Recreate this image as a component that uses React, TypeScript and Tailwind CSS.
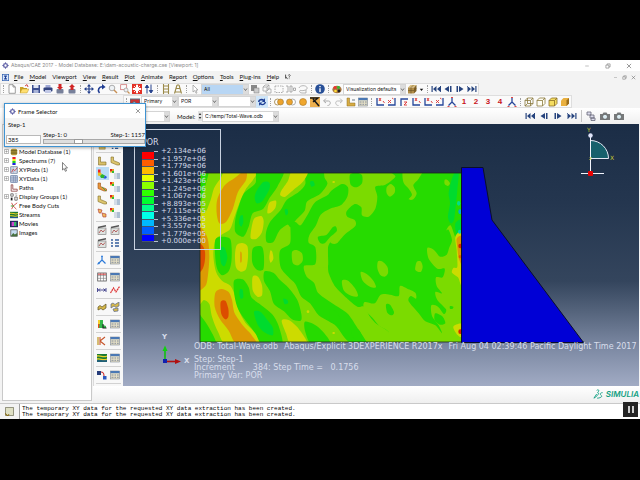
import React from "react";

type Pt = [number, number];

const GREEN = "#26db00";
const LIME = "#7bdb00";
const YELLOW = "#cddb00";
const ORANGE = "#dc9a04";
const RED = "#dc4c00";
const TEAL = "#00db2e";

/* Closed smooth curve through the points "x,y x,y ..." */
function smooth(src: string): string {
  const p: Pt[] = src.split(" ").map((s) => s.split(",").map(Number) as Pt);
  const n = p.length;
  let d = `M${p[0][0]} ${p[0][1]}`;
  for (let i = 0; i < n; i++) {
    const a = p[(i - 1 + n) % n];
    const b = p[i];
    const c = p[(i + 1) % n];
    const e = p[(i + 2) % n];
    d += `C${b[0] + (c[0] - a[0]) / 7} ${b[1] + (c[1] - a[1]) / 7} ${c[0] - (e[0] - b[0]) / 7} ${c[1] - (e[1] - b[1]) / 7} ${c[0]} ${c[1]}`;
  }
  return d + "Z";
}

const CONTOURS: [string, string][] = [
  [GREEN, "20,30 55,30 48,70 38,105 30,140 20,150"],
  [GREEN, "20,460 38,475 58,505 78,555 20,560"],
  // yellow and orange crests along the left edge
  [YELLOW, "62,120 72,85 92,55 112,30 200,30 190,58 166,90 148,130 132,175 120,208 92,226 76,240 70,285 78,335 96,362 122,378 136,410 146,450 166,488 196,520 214,556 112,556 84,515 66,470 58,432 42,420 20,420 20,160 44,160"],
  [ORANGE, "82,118 104,76 134,54 168,30 168,60 144,96 128,148 108,186 88,190 80,160"],
  [ORANGE, "20,206 40,210 54,240 58,290 54,345 46,378 20,380"],
  [RED, "20,250 36,255 45,275 44,306 36,330 20,336"],
  [ORANGE, "76,398 94,387 116,396 126,420 134,460 160,498 184,524 200,556 142,556 116,512 90,478 74,440"],
  [RED, "92,426 106,422 115,446 115,470 106,478 94,462"],
  // troughs
  [GREEN, "76,240 96,230 120,236 125,265 124,306 116,334 96,346 82,328 76,295"],
  [TEAL, "92,262 104,264 112,292 104,318 94,312 90,285"],
  [GREEN, "204,30 196,70 162,100 146,140 136,178 136,216 160,230 176,200 188,160 220,146 240,112 262,80 280,30"],
  [TEAL, "200,92 220,66 238,68 238,88 218,122 200,130 194,112"],
  [TEAL, "150,170 158,166 160,186 154,200 147,190"],
  [GREEN, "132,362 158,358 176,382 184,412 212,434 246,462 266,498 276,556 218,556 196,520 164,478 144,446 134,410"],
  [TEAL, "192,456 212,456 232,480 248,502 248,526 222,516 204,496"],
  [TEAL, "150,388 158,390 160,412 152,416 148,402"],
  [YELLOW, "140,256 156,249 172,258 174,292 168,328 152,335 138,322 135,285"],
  [ORANGE, "151,276 155,280 155,304 151,306"],
  [GREEN, "188,266 208,258 218,264 222,290 220,328 202,330 187,308"],
  [YELLOW, "194,174 214,168 221,184 216,216 200,236 182,234 186,196"],
  [YELLOW, "188,350 204,350 216,376 216,406 202,410 188,390"],
  [YELLOW, "238,128 258,122 256,144 242,158 232,158"],
  [YELLOW, "241,272 247,276 250,296 242,308 238,294"],
  // inner bands
  [GREEN, "346,30 346,72 326,96 290,120 272,150 240,186 228,218 230,246 250,246 268,212 292,194 302,202 318,180 344,152 352,124 390,102 412,72 404,54 396,30"],
  [TEAL, "284,150 292,148 294,160 288,166"],
  [TEAL, "360,66 370,64 374,76 364,80"],
  [YELLOW, "274,92 294,62 308,30 354,30 340,64 310,90 286,110 271,106"],
  [GREEN, "302,196 316,186 332,196 352,166 374,128 412,106 424,92 456,72 474,82 472,110 452,136 420,146 392,164 378,196 358,226 356,248 376,262 376,312 342,318 350,350 372,368 384,398 412,420 452,446 474,462 500,500 534,556 500,556 470,540 440,500 416,484 386,466 360,430 334,410 316,372 296,352 272,322 270,272 300,250"],
  [GREEN, "224,334 250,338 270,360 296,384 322,420 334,462 332,482 306,478 282,454 252,432 240,394 222,362"],
  [GREEN, "344,486 366,490 390,506 414,534 420,556 366,556 346,516"],
  [TEAL, "280,416 292,420 294,430 284,432"],
  [LIME, "306,276 320,270 336,280 338,302 324,316 308,308"],
  [YELLOW, "275,482 296,480 326,506 354,556 304,556 288,520"],
];

const RIGHT_FIELD =
  "612,30 616,50 586,74 556,80 562,110 556,146 536,170 516,166 514,142 494,132 470,154 472,170 494,180 496,198 466,222 440,250 424,250 414,240 414,320 418,344 436,380 470,414 502,440 522,440 540,470 560,492 592,512 612,536 616,560 830,560 830,30";

const RIGHT_DETAIL: [string, string][] = [
  [LIME, "642,30 640,66 656,86 666,104 656,118 670,118 680,100 670,76 686,56 696,30"],
  [LIME, "590,82 602,72 614,82 614,98 600,110 590,100"],
  [LIME, "764,60 772,60 780,70 774,78 764,72"],
  [LIME, "564,304 576,304 592,320 594,340 584,350 570,344 562,324"],
  [LIME, "512,336 530,342 550,362 558,382 540,380 518,362"],
  [LIME, "456,362 474,362 496,386 504,408 486,408 462,392"],
  [LIME, "680,306 692,304 698,320 692,336 676,330"],
  [LIME, "712,264 732,270 750,290 770,284 778,262 786,240 776,210 768,212 782,196 800,240 830,260 830,560 622,560 594,514 568,498 546,472 522,446 524,426 554,430 572,404 600,404 626,408 630,378 652,386 676,398 678,416 662,408 656,424 686,460 706,484 736,496 756,520 746,496 726,468 724,436 744,440 762,462 768,448 742,420 736,396 756,400 740,378 738,352 758,352 764,326 742,326 716,296"],
  [GREEN, "588,434 600,434 612,456 606,466 592,458"],
  [GREEN, "486,510 504,508 514,522 514,540 496,540 486,526"],
  [GREEN, "420,448 440,456 450,476 452,496 430,490 418,478"],
  [GREEN, "480,44 500,38 516,46 516,70 500,82 482,74"],
  [GREEN, "736,460 758,470 766,490 750,494 734,480"],
  [GREEN, "780,438 790,440 788,446 780,446"],
  [TEAL, "784,62 794,38 806,38 802,90 798,130 792,180 782,190 774,170 780,130 776,100"],
  [TEAL, "796,190 816,180 816,230 800,226"],
  [YELLOW, "796,230 816,222 816,372 804,352 786,338 790,324 802,320 800,270"],
  [ORANGE, "800,236 816,232 816,310 806,294 802,262"],
  [YELLOW, "790,500 816,492 816,530 802,524"],
];

const SPOTS: [string, number, number, number, number][] = [
  ["#d82800", 811, 258, 6, 7],
  ["#e06000", 810, 290, 4, 5],
  ["#00a8dc", 810, 155, 5, 7],
  ["#00cfb0", 809, 215, 5, 6],
  ["#00dc90", 806, 130, 5, 7],
  ["#d82800", 811, 515, 6, 7],
  [YELLOW, 431, 66, 4, 3],
  [YELLOW, 431, 519, 4, 3],
  [YELLOW, 354, 455, 4, 4],
];

function Scene() {
  return (
    <svg className="absolute left-0 top-0" width="517" height="262" viewBox="123 124 517 262" aria-hidden="true">
      <defs>
        <clipPath id="fluid">
          <rect x="200" y="173" width="262" height="169" />
        </clipPath>
      </defs>
      <g clipPath="url(#fluid)">
        <rect x="200" y="173" width="262" height="169" fill={LIME} />
        <g transform="translate(190 160) scale(0.33333)">
          {CONTOURS.map(([c, s], i) => (
            <path key={i} d={smooth(s)} fill={c} />
          ))}
          <path d={smooth(RIGHT_FIELD)} fill={GREEN} />
          <path d={smooth("362,232 376,222 386,236 400,228 420,222 430,204 440,206 438,226 446,236 440,250 426,242 414,262 414,318 398,322 384,318 382,270 370,252")} fill={LIME} />
          <path d={smooth("384,230 410,224 428,202 438,200 440,214 420,232 404,250 390,248")} fill={GREEN} />
          {RIGHT_DETAIL.map(([c, s], i) => (
            <path key={i} d={smooth(s)} fill={c} />
          ))}
          {SPOTS.map(([c, x, y, rx, ry], i) => (
            <ellipse key={i} cx={x} cy={y} rx={rx} ry={ry} fill={c} />
          ))}
        </g>
      </g>
      <path d="M200 173H462M200 173V342H584" fill="none" stroke="#1b2a16" strokeWidth="0.8" />
      <path d="M461.500 167.500H483L492 220L583.500 342.500H461.500Z" fill="#0000d6" stroke="#0b0f2a" strokeWidth="1" />
      {/* model triad */}
      <path d="M165 361V349" stroke="#10c010" strokeWidth="1.600" />
      <path d="M165 345.500L167.500 351H162.500Z" fill="#10d010" />
      <path d="M166 361.500H176" stroke="#b01010" strokeWidth="1.600" />
      <path d="M181 361.500L175 359V364Z" fill="#b01010" />
      <rect x="163" y="359" width="4" height="4" fill="#1020b0" />
      {/* view compass */}
      <path d="M590.500 140.500A18 18 0 0 1 608.500 158.500H590.500Z" fill="#17606c" stroke="#e4e8f4" strokeWidth="1" />
      <path d="M590.500 137V173M581 173.500H604" stroke="#f2f4fc" strokeWidth="1" />
      <circle cx="590.500" cy="135.500" r="2.200" fill="#dfe4fa" />
      <rect x="588" y="171" width="5" height="5" rx="1" fill="#e80000" />
      <path d="M589.500 157.500H591.500L589.500 159.500H591.500" fill="none" stroke="#c8d040" strokeWidth="0.600" />
    </svg>
  );
}

const LEGEND_VALUES = [
  "+2.134e+06", "+1.957e+06", "+1.779e+06", "+1.601e+06", "+1.423e+06", "+1.245e+06", "+1.067e+06",
  "+8.893e+05", "+7.115e+05", "+5.336e+05", "+3.557e+05", "+1.779e+05", "+0.000e+00",
];
const LEGEND_COLORS = [
  "bg-[#ff0000]", "bg-[#ff5d00]", "bg-[#ffb900]", "bg-[#e8ff00]", "bg-[#8bff00]", "bg-[#2eff00]",
  "bg-[#00ff2e]", "bg-[#00ff8b]", "bg-[#00ffe8]", "bg-[#00b9ff]", "bg-[#005dff]", "bg-[#0000ff]",
];

/* ---- small icons, all on a 10 x 10 grid ---- */
const G: Record<string, React.ReactNode> = {
  doc: <path d="M2 .7H6L8.300 3V9.300H2ZM6 .7V3H8.300" fill="#fff" stroke="#777" strokeWidth=".7" />,
  open: <><path d="M1 9V3H4L5 4H8V9Z" fill="#c9a227" /><path d="M1 9L3 5H10L8 9Z" fill="#ffdf70" stroke="#a98414" strokeWidth=".4" /><path d="M6 2L8 .6L9 3" fill="none" stroke="#c33" strokeWidth=".9" /></>,
  save: <><rect x="1" y="1" width="8" height="8" fill="#3c4f90" /><rect x="2.500" y="1" width="5" height="3" fill="#dde3f2" /><rect x="2.500" y="6" width="5" height="3" fill="#a9b4d8" /></>,
  print: <><rect x="2.500" y="1" width="5" height="3" fill="#9fa8d5" /><rect x=".5" y="3.500" width="9" height="4" rx="1" fill="#34457f" /><rect x="2" y="6" width="6" height="3" fill="#c2c9e6" /></>,
  dbIn: <><rect x="1.500" y="5" width="7" height="4.500" rx="1" fill="#77809a" /><path d="M3.500 0H6.500V3H8L5 6L2 3H3.500Z" fill="#d02525" /></>,
  dbOut: <><rect x="1.500" y="5" width="7" height="4.500" rx="1" fill="#77809a" /><path d="M5 0L8 3H6.500V6H3.500V3H2Z" fill="#d02525" /></>,
  move: <path d="M5 0L7 2.400H5.600V4.400H7.600V3L10 5L7.600 7V5.600H5.600V7.600H7L5 10L3 7.600H4.400V5.600H2.400V7L0 5L2.400 3V4.400H4.400V2.400H3Z" fill="#24408c" />,
  rotate: <><path d="M3.500 9C1 6 3 2.500 7 2.800" fill="none" stroke="#1f3c92" strokeWidth="1.600" /><path d="M6 0L9.600 3L6 5.600Z" fill="#1f3c92" /></>,
  zoom: <><circle cx="4" cy="4" r="2.800" fill="#eef2f5" stroke="#9a9a9a" strokeWidth=".8" /><path d="M6 6L9 9" stroke="#c79055" strokeWidth="1.400" /></>,
  zoomBox: <><rect x=".7" y=".7" width="6" height="5" fill="none" stroke="#c66" strokeWidth=".7" /><circle cx="6" cy="6" r="2" fill="#eee" stroke="#999" strokeWidth=".7" /><path d="M7.500 7.500L9.500 9.500" stroke="#c79055" strokeWidth="1.200" /></>,
  fit: <><rect width="10" height="10" fill="#e33025" /><path d="M5 .8V9.200M.8 5H9.200" stroke="#fff" strokeWidth="2" /><path d="M2 2L8 8M8 2L2 8" stroke="#fff" strokeWidth=".9" /><rect x="3.700" y="3.700" width="2.600" height="2.600" fill="#fff" /></>,
  upDown: <path d="M3 9.500V3M7 .5V7M1.300 3.500L3 1L4.700 3.500ZM5.300 6.500L7 9L8.700 6.500Z" fill="#24408c" stroke="#24408c" strokeWidth="1" />,
  ruler: <path d="M2.500 0V10M7.500 0V10M2.500 2H7.500M2.500 5H7.500M2.500 8H7.500" stroke="#9b8a4a" strokeWidth="1.100" />,
  persp: <path d="M4 1L1.500 9.500M6 1L8.500 9.500M4 1H6M3 4.500H7M2 8H8" fill="none" stroke="#9b8a4a" strokeWidth="1.100" />,
  cursor: <path d="M3 1V8L4.800 6.500L6 9.300L7 8.800L6 6H8Z" fill="#fff" stroke="#888" strokeWidth=".6" />,
  sq: <><rect x="1" y="1" width="6" height="6" fill="#888" /><rect x="4" y="4" width="5" height="5" fill="#ccc" stroke="#777" strokeWidth=".5" /></>,
  cubeG: <path d="M1 3L3 1H7V5L5 7M1 3H5V7H1ZM5 3L7 1M5 5H9V9H4V7" fill="none" stroke="#999" strokeWidth=".7" />,
  dashed: <rect x="1" y="2" width="8" height="6.500" fill="none" stroke="#999" strokeWidth=".8" strokeDasharray="1.500 1" />,
  nodes: <path d="M0 2H2V8H0M4 2H6V8H4ZM7.500 4H9.500V6.500H7.500Z" fill="none" stroke="#999" strokeWidth=".8" />,
  lasso: <path d="M1 4C2 1 8 1 9 3.500S5 7 3 6.500S1 9 4 9H8V6" fill="none" stroke="#999" strokeWidth=".7" />,
  info: <><circle cx="5" cy="5" r="4.800" fill="#274f97" /><path d="M5 4.200V8M5 2V3.200" stroke="#fff" strokeWidth="1.400" /></>,
  palette: <><ellipse cx="5" cy="5.500" rx="4.600" ry="3.800" fill="#a8763e" /><circle cx="3" cy="3.500" r="1.500" fill="#e33" /><circle cx="6.500" cy="3.500" r="1.400" fill="#3b3" /><circle cx="3.500" cy="7" r="1.300" fill="#fd3" /><circle cx="7" cy="7" r="1.400" fill="#222" /></>,
  cube: <><path d="M1 3.500L3.500 1H9.500L7 3.500Z" fill="#d9bd7d" /><path d="M1 3.500H7V9.500H1Z" fill="#b08c47" /><path d="M7 3.500L9.500 1V7L7 9.500Z" fill="#806025" /><path d="M1 6.500H7L9.500 4M4 9.500V3.500L6.500 1" fill="none" stroke="#5d4820" strokeWidth=".5" /></>,
  caret: <path d="M2.500 4H7.500L5 7Z" fill="#111" />,
  first: <path d="M.5 2H1.700V8H.5ZM5.500 2V8L2 5ZM9.500 2V8L6 5ZM9 2H10V8H9Z" fill="#27447e" />,
  prev: <path d="M6 2V8L1.500 5ZM7 2H8.500V8H7Z" fill="#27447e" />,
  next: <path d="M4 2V8L8.500 5ZM1.500 2H3V8H1.500Z" fill="#27447e" />,
  last: <path d="M8.300 2H9.500V8H8.300ZM4.500 2V8L8 5ZM.5 2V8L4 5ZM0 2H1V8H0Z" fill="#27447e" />,
  contour: <path d="M0 2H10V9H8L5 5H3V9H0Z" fill="#c33" stroke="#578" strokeWidth="1" />,
  sync: <path d="M1 5C1 2 5 1 7 2.500L8 1V5H4.500L6 4C4 3 2.500 4 2.500 5ZM9 5C9 8 5 9 3 7.500L2 9V5.500H5.500L4 6.500C6 7.500 7.500 6.500 7.500 5Z" fill="#1e3f96" />,
  ballA: <><circle cx="3.500" cy="5" r="3" fill="#fff" stroke="#9a7a3a" strokeWidth=".8" /><circle cx="6.500" cy="5" r="3" fill="#eda32c" stroke="#9a7a3a" strokeWidth=".6" /></>,
  ballB: <><circle cx="6.500" cy="5" r="3" fill="#fff" stroke="#999" strokeWidth=".8" /><circle cx="3.500" cy="5" r="3" fill="#eda32c" stroke="#9a7a3a" strokeWidth=".6" /></>,
  ball: <circle cx="5" cy="5" r="3.500" fill="#f0a72e" stroke="#a87626" strokeWidth=".6" />,
  probe: <><rect width="10" height="10" fill="#eeb04e" /><path d="M0 1H8L3 5M3 2L9 9" fill="none" stroke="#171717" strokeWidth="1.500" /></>,
  undo: <path d="M2 4H6.500C9 4 9 8.500 5.500 8.500M4 1.500L1.500 4L4 6" fill="none" stroke="#aaa" strokeWidth="1" />,
  redo: <path d="M8 4H3.500C1 4 1 8.500 4.500 8.500M6 1.500L8.500 4L6 6" fill="none" stroke="#bbb" strokeWidth="1" />,
  ell: <><path d="M1 1H3.500V6H9V9H1Z" fill="#d7ac44" stroke="#8d6c1e" strokeWidth=".5" /><path d="M6 3H9" stroke="#456" strokeWidth=".8" /></>,
  table: <><rect x=".5" y="1" width="9" height="8" fill="#e4dfc6" stroke="#7d8794" strokeWidth=".6" /><rect x=".5" y="1" width="9" height="2.200" fill="#4a78b4" /><path d="M1.500 5H3.500M4.500 5H6M7 5H8.700M1.500 7.300H3.500M4.500 7.300H6M7 7.300H8.700" stroke="#7c8798" strokeWidth=".9" /></>,
  axA: <><path d="M2 1V8H9" fill="none" stroke="#26479a" strokeWidth="1.300" /><path d="M4 1L6 4M6 1L4 4M8 4L9.500 6" stroke="#d33" strokeWidth=".9" /></>,
  axB: <><path d="M8 1V8H1" fill="none" stroke="#26479a" strokeWidth="1.300" /><path d="M1 3L4 6M4 3L1 6M5 1L6.500 2" stroke="#d33" strokeWidth=".9" /></>,
  axC: <><path d="M2 9V2H9" fill="none" stroke="#26479a" strokeWidth="1.300" /><path d="M5 5H8L5 8H8" fill="none" stroke="#d33" strokeWidth=".9" /></>,
  tri: <><path d="M5 1V5L1.500 8.500M5 5L8.500 8.500" fill="none" stroke="#26479a" strokeWidth="1.300" /><path d="M4 .5H6M.5 9.500H2.500M7.500 9.500H9.500" stroke="#d33" strokeWidth=".9" /></>,
  cubeW: <path d="M1 3.500L3.500 1H9V6.500L6.500 9H1ZM1 3.500H6.500V9M6.500 3.500L9 1M3.500 1V6.500H9M3.500 6.500L1 9" fill="none" stroke="#8a7a3e" strokeWidth=".8" />,
  cubeH: <path d="M1 3.500L3.500 1H9V6.500L6.500 9H1ZM1 3.500H6.500V9M6.500 3.500L9 1" fill="#fffef4" stroke="#8a7a3e" strokeWidth=".8" />,
  cubeY: <path d="M1 3.500L3.500 1H9V6.500L6.500 9H1ZM1 3.500H6.500V9M6.500 3.500L9 1" fill="#f5dd62" stroke="#8a6f26" strokeWidth=".8" />,
  cubeS: <><path d="M1 3.500L3.500 1H9V6.500L6.500 9H1Z" fill="#e9b040" /><path d="M6.500 3.500L9 1V6.500L6.500 9Z" fill="#9a6c1c" /></>,
  link: <path d="M1 1H5V4H1ZM4 4H8V7H4ZM5 7H9V9.500H5Z" fill="#dcdcec" stroke="#667" strokeWidth=".8" />,
  camera: <><path d="M0 3H2.500L3.500 1.500H6.500L7.500 3H10V9H0Z" fill="#77797a" /><circle cx="5" cy="5.800" r="2.500" fill="#dcecf2" stroke="#444" strokeWidth=".6" /></>,
  db: <><rect x="1" y="1" width="8" height="8" rx="2" fill="#b59b39" /><path d="M1 3.500H9M1 6.300H9" stroke="#4d4218" strokeWidth="1" /></>,
  spectrum: <><rect x="3" y="0" width="4" height="2.500" fill="#e22" /><rect x="3" y="2.500" width="4" height="2.500" fill="#ee2" /><rect x="3" y="5" width="4" height="2.500" fill="#2c2" /><rect x="3" y="7.500" width="4" height="2.500" fill="#22d" /></>,
  plot: <><rect x="1" y="1" width="8" height="8" fill="#e8edf6" stroke="#556a8c" strokeWidth=".9" /><path d="M1 4H9M1 6.500H9M4 1V9" stroke="#8394b4" strokeWidth=".6" /><path d="M2 8L4 4L6 6L9 2" fill="none" stroke="#c33" strokeWidth=".9" /></>,
  grid: <><rect x="1" y="1" width="8" height="8" fill="#f1f4fa" stroke="#4b6794" strokeWidth="1" /><path d="M1 3.700H9M1 6.300H9M4 1V9M6.500 1V9" stroke="#4b6794" strokeWidth=".8" /></>,
  path: <path d="M1.500 1H3.500V6.500H9M1.500 1V9H9V6.500" fill="none" stroke="#8d4040" strokeWidth="1" />,
  groups: <><path d="M1 1H4V4H1ZM6 5H9V9H6Z" fill="none" stroke="#333" strokeWidth=".8" /><path d="M6 1H9M1 6H3V9H1M7 3H9" stroke="#888" strokeWidth=".8" /></>,
  cuts: <><path d="M2 1L4 5L2 9M4 5L9 1M4 5L8 9" fill="none" stroke="#c33" strokeWidth="1" /><path d="M1 5H5" stroke="#3a3" strokeWidth="1.200" /></>,
  streams: <><rect x="0" y="1" width="10" height="8" fill="#1d7a35" /><path d="M0 3C4 2 6 5 10 3M0 6C4 5 6 8 10 6" fill="none" stroke="#ead228" strokeWidth="1.300" /><path d="M0 8H10" stroke="#2246b8" strokeWidth="1" /></>,
  movies: <><rect x="0" y="1" width="10" height="8" fill="#26265c" /><rect x="2" y="2.500" width="3" height="5" fill="#c4c" /><rect x="5" y="2.500" width="3" height="5" fill="#3b6" /></>,
  images: <><rect x="1" y="1" width="8" height="8" fill="#c5dcf0" stroke="#444" strokeWidth=".9" /><path d="M1 9L4 5L6 7L9 5V9Z" fill="#47703d" /></>,
  beamY: <path d="M1.500 1H3.500V6H9V9H1.500Z" fill="#d8c06a" stroke="#7f6b27" strokeWidth=".6" />,
  beamD: <path d="M1 1H3.500V4.500L9.500 7V9H7L1 6.500Z" fill="#dcc56e" stroke="#7f6b27" strokeWidth=".6" />,
  beamC: <><path d="M1 .5H3.500V4L1 4Z" fill="#e22" /><path d="M1 3.500H3.500L5 5L3 7L1 6.500Z" fill="#e8c020" /><path d="M3 7L5 5L8 6.500L7 9H4Z" fill="#2bb52b" /><path d="M8 6.500L10 8L9 9.500H6.500Z" fill="#2258d8" /></>,
  beamO: <><path d="M1 1H3.500V4.500L9.500 7V9H7L1 6.500Z" fill="#e8953a" stroke="#9a5218" strokeWidth=".6" /><path d="M5 5L9 9" stroke="#3a4" strokeWidth=".8" /></>,
  symb: <path d="M1 1L5 2L4 5H2ZM5 5L9 6V9H6Z" fill="#f0b85a" stroke="#a33" strokeWidth=".6" />,
  list: <><rect x="0" y="0" width="4" height="3.500" fill="#e8a020" /><rect x="0" y="0" width="2" height="2" fill="#d22" /><rect x="2" y="2" width="2" height="2" fill="#3b3" /><path d="M4.500 5H5.500M6.500 5H10M4.500 7H5.500M6.500 7H10M4.500 9H5.500M6.500 9H10" stroke="#3c6a9c" strokeWidth=".8" /></>,
  clap: <><rect x="1" y="3" width="8" height="6.500" fill="#dfe3e0" stroke="#777" strokeWidth=".6" /><path d="M1 2.500L9 .8" stroke="#555" strokeWidth="1.400" /><path d="M2 8L4 5L6 7L8 4.500" fill="none" stroke="#a44" strokeWidth=".8" /></>,
  opts: <path d="M1 2H3M5 2H9M1 5H3M5 5H9M1 8H3M5 8H9" stroke="#345c9a" strokeWidth="1.500" />,
  csys: <><path d="M5 1V5L1.500 8.500M5 5L8.500 8.500" fill="none" stroke="#2d7ad8" strokeWidth="1.200" /><path d="M5 0L6 2H4ZM0 9.500L1.500 7L3 9Z" fill="#2d7ad8" /></>,
  sheet: <><rect x=".7" y="1" width="8.600" height="8" fill="#fff" stroke="#555" strokeWidth=".8" /><path d="M.7 3.600H9.300M.7 6.300H9.300M3.500 1V9M6.500 1V9" stroke="#777" strokeWidth=".6" /><path d="M1 2.200H9" stroke="#d33" strokeWidth=".9" /></>,
  dim: <path d="M.5 3V7M9 3V7M1 5H9M3 3.500L1.500 5L3 6.500M6.500 3.500L8 5L6.500 6.500" fill="none" stroke="#3c3c88" strokeWidth=".9" />,
  zig: <path d="M.5 8L3.500 3L6 7L9.500 1.500" fill="none" stroke="#d33" strokeWidth="1.200" strokeDasharray="2 .5" />,
  strip: <path d="M1 5L3 3.500L5 5L9 2V6L6 8L4 6.500L1 8Z" fill="#d6b84a" stroke="#5c5024" strokeWidth=".7" />,
  strips: <path d="M1 2L3 1L5 2.500L9 0V4L6 5.500L4 4L1 6ZM3 7L8 6V9L4 9.500Z" fill="#d6b84a" stroke="#5c6a8c" strokeWidth=".7" />,
  section: <><path d="M1 1H4V9H1Z" fill="#e84e1c" /><path d="M3 1H6V6L9 7V9H2Z" fill="#32b84a" /><path d="M6 5V9H9.500" fill="none" stroke="#222" strokeWidth="1.100" /><rect x="1" y="1" width="2" height="4" fill="#f2d02c" /></>,
  kcut: <><path d="M3 1V9M3 5L8 1M3 5L8 9" fill="none" stroke="#c6542a" strokeWidth="1.100" /><path d="M1 1V9" stroke="#c8a23c" strokeWidth="1.400" /></>,
  jump: <><rect x="0" y="1" width="4" height="4" fill="#263c7a" /><rect x="6" y="6" width="3.500" height="3.500" fill="#2b59c0" /><path d="M4 2C7 2 7 4 7 6" fill="none" stroke="#c33" strokeWidth="1.100" /></>,
  app: <path d="M5 0L6.500 2H8V3.500L10 5L8 6.500V8H6.500L5 10L3.500 8H2V6.500L0 5L2 3.500V2H3.500ZM5 3.300A1.700 1.700 0 1 0 5 6.700A1.700 1.700 0 1 0 5 3.300Z" fill="#6263a8" fillRule="evenodd" />,
  win: <><rect x=".5" y=".5" width="9" height="9" fill="#dbe8fa" stroke="#2e5faf" strokeWidth="1" /><path d="M3 3H7M5 3V7M3 7H7" stroke="#1b3f98" strokeWidth="1.600" /></>,
  help: <><path d="M1 1V7L2.500 5.600L4 8.500" fill="none" stroke="#222" strokeWidth="1.300" /><path d="M5.500 2.500C6 0 9.500 1 8.500 3L7 4.500V6M7 7.500V8.500" fill="none" stroke="#222" strokeWidth="1.100" /></>,
  min: <path d="M2 5H8" stroke="#999" strokeWidth="1" />,
  restore: <path d="M1.500 3.500H6.500V8.500H1.500ZM3.500 3.500V1.500H8.500V6.500H6.500" fill="none" stroke="#777" strokeWidth="1" />,
  close: <path d="M1.500 1.500L8.500 8.500M8.500 1.500L1.500 8.500" stroke="#666" strokeWidth="1.100" />,
};

function Icon({ n, className = "size-2" }: { n: string; className?: string }) {
  return (
    <svg viewBox="0 0 10 10" className={`shrink-0 ${className}`} aria-hidden="true">
      {G[n]}
    </svg>
  );
}

function Tool({ n, label, className = "" }: { n: string; label?: string; className?: string }) {
  return (
    <button type="button" aria-label={label ?? n} className={`flex h-3 w-3 shrink-0 items-center justify-center ${className}`}>
      <Icon n={n} className="size-[10px]" />
    </button>
  );
}

const Grip = () => <span className="mx-0.5 h-2 shrink-0 border-l border-dotted border-[#a0a0a0]" />;

function Combo({ label, value, className, tone = "bg-white" }: { label: string; value: string; className: string; tone?: string }) {
  return (
    <div className={`flex h-[11px] shrink-0 items-center border border-[#d4d4d4] ${tone} ${className}`}>
      <select aria-label={label} defaultValue={value} className="h-full w-full min-w-0 flex-1 appearance-none bg-transparent pl-0.5 font-['Inter','Noto_Sans',sans-serif] text-[5px] leading-[9px] text-[#111] outline-none">
        <option>{value}</option>
      </select>
      <svg viewBox="0 0 5 9" className="pointer-events-none h-[9px] w-[5px] shrink-0 bg-[#dcdcdc]" aria-hidden="true">
        <path d="M1 3.500L2.500 5.500L4 3.500" fill="none" stroke="#555" strokeWidth=".8" />
      </svg>
    </div>
  );
}

const MENUS = ["File", "Model", "Viewport", "View", "Result", "Plot", "Animate", "Report", "Options", "Tools", "Plug-ins", "Help"];
const UNDERLINE: Record<string, number> = { Viewport: 4, Report: 1 };

function MenuItem({ text }: { text: string }) {
  const k = UNDERLINE[text] ?? 0;
  return (
    <button type="button" className="leading-3">
      {text.slice(0, k)}
      <span className="underline">{text[k]}</span>
      {text.slice(k + 1)}
    </button>
  );
}

const TREE: [string, string, boolean][] = [
  ["Output Databases (1)", "db", true],
  ["Model Database (1)", "db", true],
  ["Spectrums (7)", "spectrum", true],
  ["XYPlots (1)", "plot", true],
  ["XYData (1)", "grid", true],
  ["Paths", "path", false],
  ["Display Groups (1)", "groups", true],
  ["Free Body Cuts", "cuts", false],
  ["Streams", "streams", false],
  ["Movies", "movies", false],
  ["Images", "images", false],
];

const TOOLBOX: string[][] = [
  ["beamY", "beamD", "beamC", "list", "beamO", "list", "beamD", "list", "symb", "list"],
  ["clap", "clap", "clap", "opts"],
  ["csys", "table"],
  ["sheet", "table", "dim", "zig"],
  ["strip", "strips"],
  ["section", "table"],
  ["kcut", "table"],
  ["streams", "table"],
  ["jump", "table"],
];

function FrameSelector() {
  return (
    <section aria-label="Frame Selector" className="absolute left-1 top-[43px] z-10 flex h-11 w-[142px] flex-col border border-[#3f93d2] bg-[#f4f4f4] shadow-[0_1px_3px_rgba(0,0,0,0.35)]">
      <header className="flex h-3.5 shrink-0 items-center gap-0.5 bg-white px-1">
        <Icon n="app" className="size-[7px]" />
        <h2>Frame Selector</h2>
        <button type="button" aria-label="Close" className="ml-auto">
          <Icon n="close" className="size-[6px]" />
        </button>
      </header>
      <p className="pl-[3px] pt-0.5 leading-[9px]">Step-1</p>
      <div className="mt-auto flex items-end gap-0.5 pb-0.5 pl-px">
        <input aria-label="Frame" defaultValue="385" className="h-[9px] w-[35px] border border-[#b9b9b9] bg-white pl-px text-[6px] leading-[7px] outline-none" />
        <div className="min-w-0 flex-1">
          <div className="flex justify-between leading-[9px]">
            <label htmlFor="frame">Step-1: 0</label>
            <span>Step-1: 1157</span>
          </div>
          <input
            id="frame"
            type="range"
            min="0"
            max="1157"
            defaultValue="385"
            className="block h-[5px] w-full appearance-none border border-[#a8a8a8] bg-[#dedede] [&::-webkit-slider-thumb]:h-[5px] [&::-webkit-slider-thumb]:w-[9px] [&::-webkit-slider-thumb]:appearance-none [&::-webkit-slider-thumb]:border [&::-webkit-slider-thumb]:border-[#999999] [&::-webkit-slider-thumb]:bg-white"
          />
        </div>
      </div>
    </section>
  );
}

export default function App() {
  return (
    <div className="min-h-screen overflow-hidden bg-black pt-[60px] font-['Lato','Noto_Sans',sans-serif] text-[6px] text-[#111]">
      <div className="relative bg-[#f3f3f3]">
        <header className="flex h-[11px] items-center gap-0.5 bg-white pl-0.5 pr-2 text-[#8a8a8a]">
          <Icon n="app" className="size-[7px]" />
          <h1 className="font-['Inter','Noto_Sans',sans-serif] text-[5px]">Abaqus/CAE 2017 - Model Database: E:\dam-acoustic-charge.cae [Viewport: 1]</h1>
          <div className="ml-auto flex gap-[15px]">
            <button type="button" aria-label="Minimize"><Icon n="min" className="size-[6px]" /></button>
            <button type="button" aria-label="Restore"><Icon n="restore" className="size-[6px]" /></button>
            <button type="button" aria-label="Close window"><Icon n="close" className="size-[6px]" /></button>
          </div>
        </header>

        <nav className="flex h-3 items-center gap-1.5 pl-0.5 pr-1">
          <Icon n="win" className="-mr-px size-[7px]" />
          {MENUS.map((m) => (
            <MenuItem key={m} text={m} />
          ))}
          <Icon n="help" className="size-[6px]" />
          <div className="ml-auto flex gap-1">
            <Icon n="min" className="size-[5px]" />
            <Icon n="restore" className="size-[5px]" />
            <Icon n="close" className="size-[5px]" />
          </div>
        </nav>

        <div className="flex h-3 items-center">
          <div className="flex h-full items-center border border-[#dedede] bg-[#fafafa]">
            <Grip />
            {["doc", "open", "save", "print", "dbIn", "dbOut"].map((n) => <Tool key={n} n={n} />)}
            <Grip />
            {["move", "rotate", "zoom", "zoomBox", "fit", "upDown"].map((n) => <Tool key={n} n={n} />)}
            <Grip />
            {["ruler", "persp"].map((n) => <Tool key={n} n={n} />)}
            <Grip />
            <Tool n="cursor" />
            <Combo label="Selection filter" value="All" className="w-12" tone="bg-[#b8d6f4]" />
            {["sq", "cubeG", "dashed", "nodes", "lasso"].map((n) => <Tool key={n} n={n} />)}
            <Grip />
            <Tool n="info" />
            <Grip />
            <Tool n="palette" />
            <Combo label="Color code" value="Visualization defaults" className="w-[63px]" />
            <Tool n="cube" />
            <Icon n="caret" className="size-[7px]" />
            <Grip />
            {["first", "prev", "next", "last"].map((n) => <Tool key={n} n={n} />)}
          </div>
        </div>

        <div className="flex h-[13px] items-center pl-[123px]">
          <div className="flex h-full items-center border border-[#dedede] bg-[#fafafa]">
            <Grip />
            <Tool n="contour" />
            <Combo label="Variable type" value="Primary" className="w-[37px]" />
            <Combo label="Output variable" value="POR" className="w-10" />
            <Combo label="Component" value="" className="w-[38px]" />
            <Tool n="sync" className="bg-[#cfe5f8]" />
            <Grip />
            {["ballA", "ballB", "ball", "probe", "undo", "redo", "ell", "table"].map((n) => <Tool key={n} n={n} />)}
            <Grip />
            {["axA", "axB", "axC", "axA", "axA", "axB", "tri"].map((n, i) => <Tool key={i} n={n} label={`View ${i + 1}`} />)}
            {["1", "2", "3", "4"].map((n) => (
              <button key={n} type="button" className="h-3 w-3 font-['Liberation_Sans',sans-serif] text-[8px] font-bold leading-3 text-[#c8141c]">{n}</button>
            ))}
            <Tool n="tri" label="Save view" />
            <Grip />
            {["cubeW", "cubeH", "cubeY", "cubeS"].map((n) => <Tool key={n} n={n} />)}
          </div>
        </div>

        <div className="flex h-4 items-center bg-gradient-to-b from-white to-[#f0f0f0] pl-[82px]">
          <label className="mr-px w-5">Module:</label>
          <Combo label="Module" value="Visualization" className="w-[67px]" />
          <span className="ml-[7px] w-[21px]">Model:</span>
          <svg viewBox="0 0 4 10" className="h-2.5 w-1 bg-[#e3e3e3]" aria-hidden="true">
            <path d="M.7 4L2 2L3.300 4ZM.7 6L2 8L3.300 6Z" fill="#333" />
          </svg>
          <Combo label="Output database" value="C:/temp/Total-Wave.odb" className="w-[77px]" />
          <div className="ml-auto flex items-center gap-0.5 pr-[15px]">
            {["first", "prev", "next", "last"].map((n) => <Tool key={n} n={n} label={`Frame ${n}`} />)}
            <span className="mx-px h-3 border-l border-[#c4c4c4]" />
            <Tool n="link" />
            <Tool n="camera" label="Snapshot" />
            <Tool n="camera" label="Restore snapshot" />
          </div>
        </div>

        <FrameSelector />

        <main className="flex">
          <aside className="w-[93px] shrink-0 pb-0.5 pl-0.5 pr-px">
            <ul className="h-full border border-[#c9c9c9] bg-white pt-[13px]">
              {TREE.map(([name, icon, expandable]) => (
                <li key={name} className="flex h-[9px] items-center gap-px pl-px">
                  {expandable ? (
                    <svg viewBox="0 0 5 5" className="size-[5px] shrink-0" aria-hidden="true">
                      <path d="M.5 .5H4.500V4.500H.5ZM1.300 2.500H3.700M2.500 1.300V3.700" fill="none" stroke="#8c8c8c" strokeWidth=".6" />
                    </svg>
                  ) : (
                    <span className="w-[5px] shrink-0" />
                  )}
                  <Icon n={icon} />
                  <span className="whitespace-nowrap">{name}</span>
                </li>
              ))}
            </ul>
          </aside>

          <div className="flex min-w-0 flex-1 flex-col">
            <div className="flex h-[262px]">
              <div className="w-[30px] shrink-0 overflow-hidden border-l border-[#dadada] bg-[#f8f8f8] px-0.5 pt-[15px]">
                <div className="grid h-3.5 grid-cols-2 place-items-center border-b border-[#d2d2d2]">
                  <Icon n="beamY" />
                  <Icon n="opts" />
                </div>
                {TOOLBOX.map((group, g) => (
                  <div key={g} className="grid grid-cols-2 border-b border-[#d2d2d2] pb-0.5 pt-px">
                    {group.map((n, i) => (
                      <button
                        key={i}
                        type="button"
                        aria-label={`${n} ${g}-${i}`}
                        className={`flex h-[13px] items-center justify-center ${n === "beamC" ? "bg-[#b9dcf5]" : ""}`}
                      >
                        <Icon n={n} className="size-[10px]" />
                      </button>
                    ))}
                  </div>
                ))}
              </div>

              <div className="relative mr-px min-w-0 flex-1 overflow-hidden bg-[linear-gradient(180deg,#1b2d46_0%,#24364f_30%,#34455d_60%,#56657d_72%,#7986a0_84%,#a1abc4_100%)] font-['DejaVu_Sans',sans-serif] text-[7px] text-[#d8deec]">
                <Scene />
                <div className="absolute left-[11px] top-[5px] h-[121px] w-[87px] border border-[#c9d2e0]">
                  <p className="pl-[7px] pt-2 text-[8px] leading-[9px]">POR</p>
                  <div className="mt-px flex pl-[7px]">
                    <div className="mt-1 flex h-[90px] w-3 flex-col">
                      {LEGEND_COLORS.map((c) => (
                        <span key={c} className={`flex-1 border-b border-[#45556b] ${c}`} />
                      ))}
                    </div>
                    <div className="mr-[3px] mt-[3px] flex h-[91px] w-1 flex-col justify-between">
                      {LEGEND_VALUES.map((v) => (
                        <span key={v} className="border-t border-[#b5bfd0]" />
                      ))}
                    </div>
                    <div className="flex h-[97px] flex-col justify-between">
                      {LEGEND_VALUES.map((v) => (
                        <span key={v} className="h-[7px] leading-[7px]">{v}</span>
                      ))}
                    </div>
                  </div>
                </div>
                <span className="absolute left-[464px] top-[1px] text-[6px] text-[#c8c832]">Y</span>
                <span className="absolute left-[487px] top-[29px] text-[6px] text-[#c8c832]">X</span>
                <span className="absolute left-[39px] top-[208px] font-bold">Y</span>
                <span className="absolute left-[61px] top-[232px] font-bold">X</span>
                <div className="absolute left-[71px] top-[219px] text-[8px] leading-2">
                  <p className="flex gap-1.5 whitespace-nowrap">
                    <span>ODB: Total-Wave.odb</span>
                    <span>Abaqus/Explicit 3DEXPERIENCE R2017x</span>
                    <span>Fri Aug 04 02:39:46 Pacific Daylight Time 2017</span>
                  </p>
                  <p className="pt-[5px]">Step: Step-1</p>
                  <p className="flex gap-[18px]">
                    <span>Increment</span>
                    <span className="whitespace-pre">384: Step Time =   0.1756</span>
                  </p>
                  <p>Primary Var: POR</p>
                </div>
              </div>
            </div>
            <div className="flex h-[17px] items-center justify-end gap-0.5 bg-gradient-to-b from-white to-[#efefef] pr-px text-[#12a082]">
              <svg viewBox="0 0 12 12" className="size-[11px]" aria-hidden="true">
                <path d="M4 1.500C6 0 7.500 1.500 5 4C7 4 6 7 1 10M1 10L4 5.500M10.500 4C8 4 7 5.500 9 7S7 10 4.500 10" fill="none" stroke="#12a082" strokeWidth="1" />
              </svg>
              <span className="font-['Inter','Open_Sans',sans-serif] text-[8px] font-semibold italic leading-[9px]">SIMULIA</span>
            </div>
          </div>
        </main>

        <footer className="flex h-4 border-t border-[#c9c9c9]">
          <button type="button" aria-label="Message area" className="flex w-[19px] items-center justify-center">
            <svg viewBox="0 0 10 10" className="size-[9px]" aria-hidden="true">
              <path d="M.5 .5H9.500V9.500H.5Z" fill="#dfe0c4" stroke="#6d6d55" strokeWidth=".8" />
              <path d="M0 7L3 10L4.500 8" fill="none" stroke="#8a6d16" strokeWidth="1.200" />
            </svg>
          </button>
          <div className="flex-1 border-l border-[#9e9e9e] bg-white pl-0.5 pt-0.5 font-['Liberation_Mono',monospace] text-[6px] leading-[6px] text-black">
            <p>The temporary XY data for the requested XY data extraction has been created.</p>
            <p>The temporary XY data for the requested XY data extraction has been created.</p>
          </div>
        </footer>

        <button type="button" aria-label="Pause" className="absolute bottom-0.5 right-0.5 flex h-[15px] w-[15px] items-center justify-center gap-0.5 bg-[#242424]">
          <span className="h-[7px] w-0.5 bg-[#cfcfcf]" />
          <span className="h-[7px] w-0.5 bg-[#cfcfcf]" />
        </button>

        <svg viewBox="0 0 6 10" className="absolute left-[62px] top-[102px] z-20 h-2.5 w-1.5" aria-hidden="true">
          <path d="M.5 .5V8L2.200 6.500L3.300 9.300L4.500 8.800L3.400 6H5.500Z" fill="#fff" stroke="#333" strokeWidth=".6" />
        </svg>
      </div>
    </div>
  );
}
